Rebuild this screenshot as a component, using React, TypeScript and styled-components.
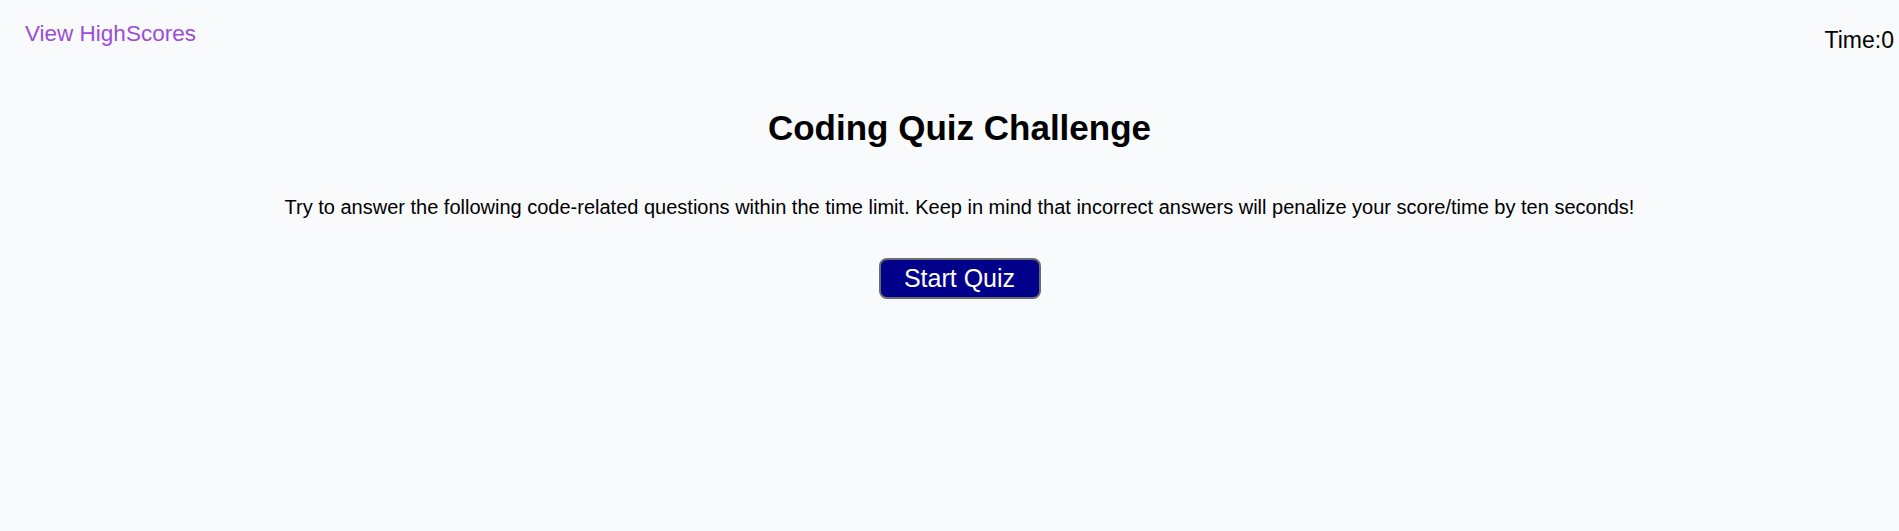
import React from "react";
import styled, { createGlobalStyle } from "styled-components";

const Global = createGlobalStyle`
  html, body { margin: 0; padding: 0; background: #f9fafc; }
  body { font-family: "Liberation Sans", Arial, sans-serif; color: #000; }
`;

const Page = styled.div`
  min-height: 531px;
  background: #f9fafc;
`;

const Header = styled.header`
  display: flex;
  justify-content: space-between;
  align-items: flex-start;
  padding: 0 5px 0 25px;
`;

const HighScoresLink = styled.a`
  color: #9b4dd6;
  font-size: 22.5px;
  text-decoration: none;
  margin-top: 21px;
  line-height: 26px;
  cursor: pointer;
`;

const Timer = styled.div`
  font-size: 23px;
  margin-top: 27px;
  line-height: 26px;
`;

const Main = styled.main`
  display: flex;
  flex-direction: column;
  align-items: center;
  text-align: center;
  padding-left: 20px;
`;

const Title = styled.h1`
  font-size: 35px;
  font-weight: bold;
  margin: 55px 0 0;
  line-height: 40px;
`;

const Intro = styled.p`
  font-size: 20px;
  margin: 48px 0 0;
  line-height: 23px;
`;

const StartButton = styled.button`
  margin-top: 39px;
  width: 162px;
  height: 41px;
  padding: 0;
  background: #00008b;
  color: #fff;
  font-family: "Liberation Sans", Arial, sans-serif;
  font-size: 25px;
  border: 2px solid #6b6b6b;
  border-radius: 8px;
  cursor: pointer;
`;

export default function App() {
  return (
    <Page>
      <Global />
      <Header>
        <HighScoresLink>View HighScores</HighScoresLink>
        <Timer>Time:0</Timer>
      </Header>
      <Main>
        <Title>Coding Quiz Challenge</Title>
        <Intro>
          Try to answer the following code-related questions within the time limit. Keep in mind that incorrect answers will penalize your score/time by ten seconds!
        </Intro>
        <StartButton>Start Quiz</StartButton>
      </Main>
    </Page>
  );
}
